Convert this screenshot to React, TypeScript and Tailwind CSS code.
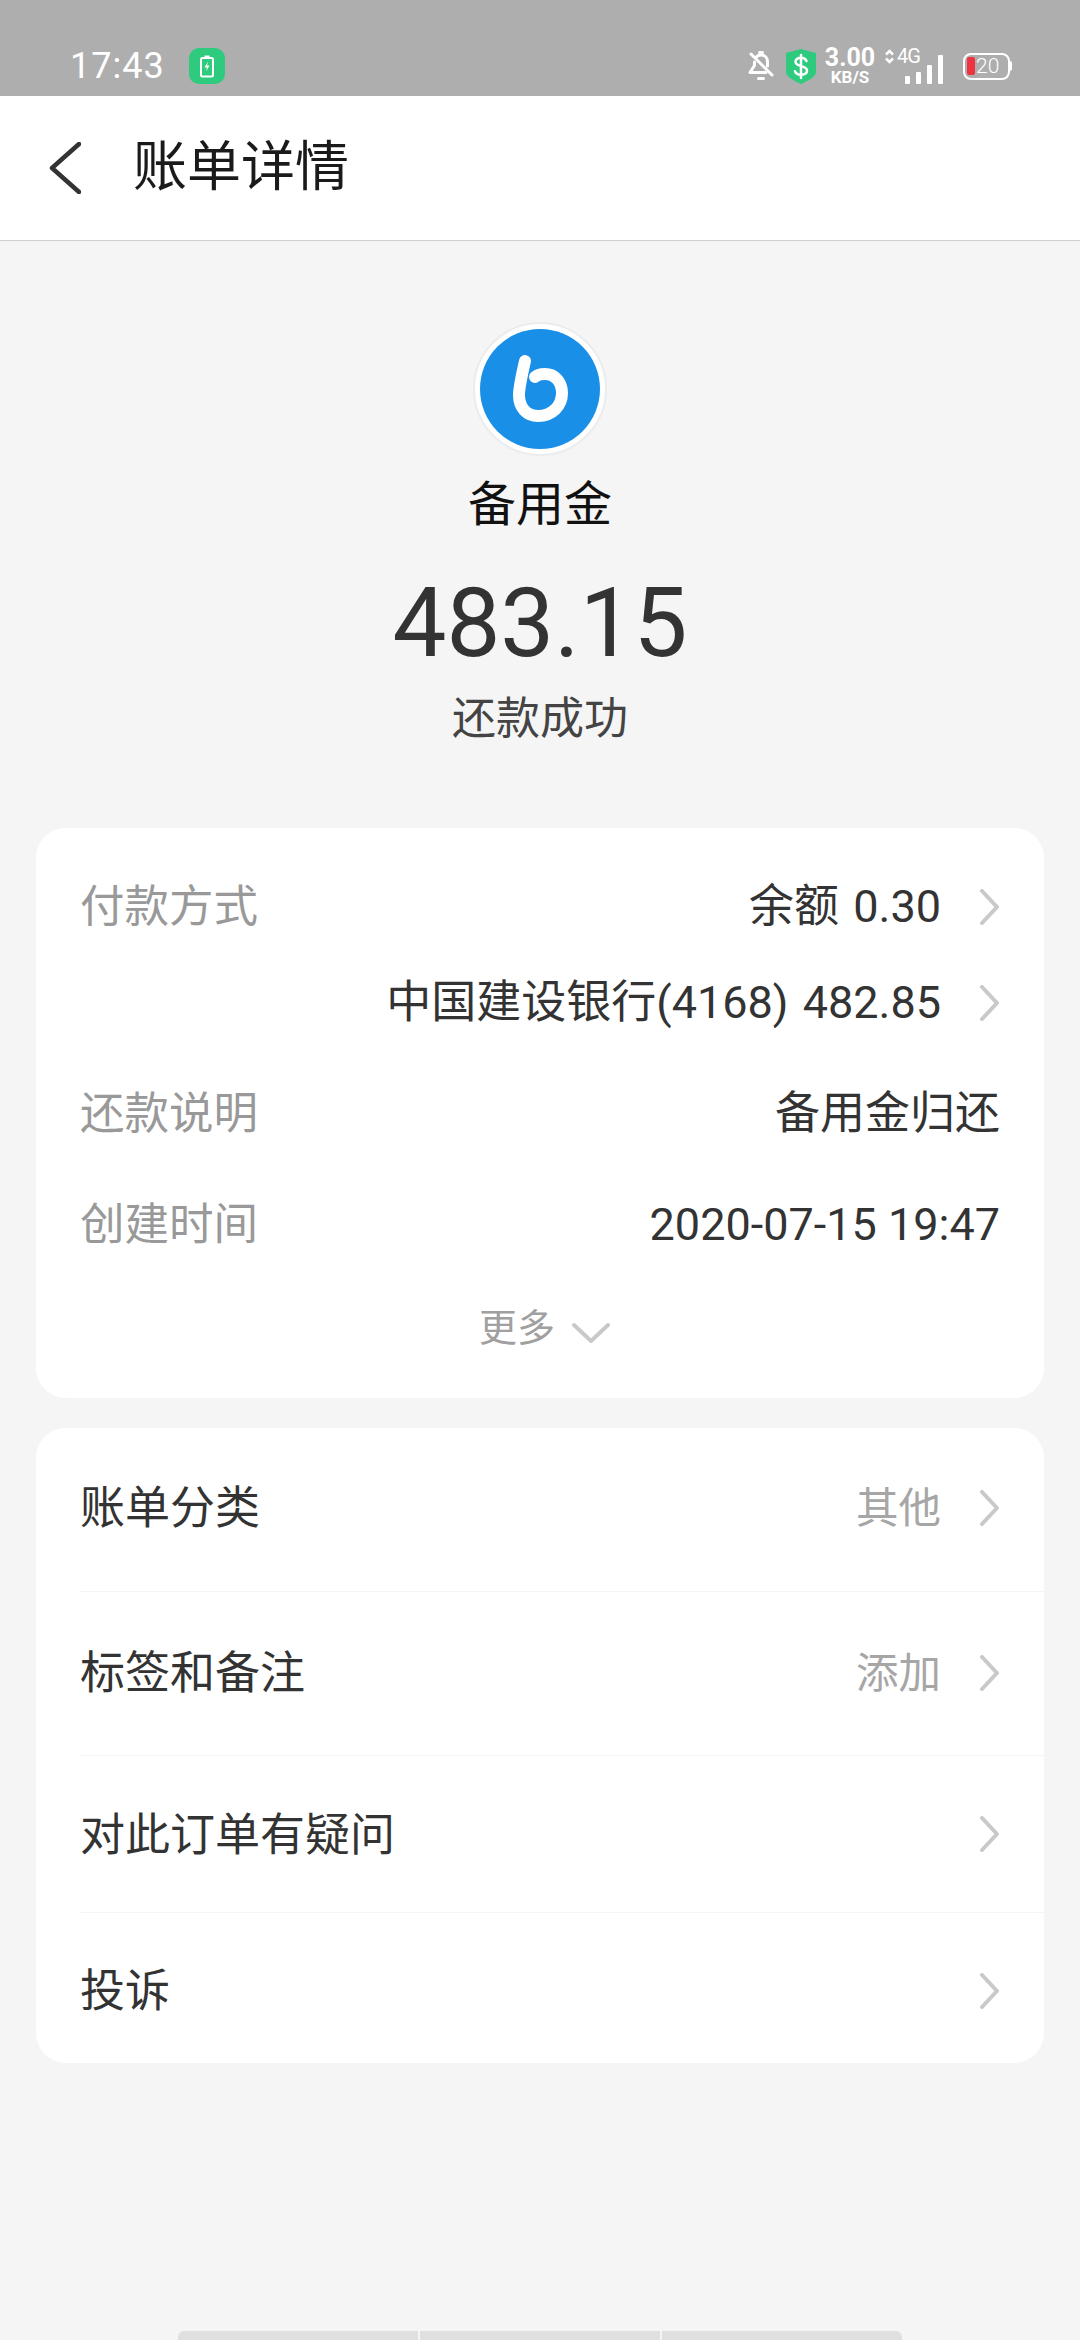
const font = { fontFamily: 'Roboto, "Noto Sans CJK SC", sans-serif' }

function ChevronRight() {
    return (
        <svg width="20" height="36" viewBox="0 0 20 36" fill="none" stroke="#c9c9c9" strokeWidth="4" strokeLinecap="round" strokeLinejoin="round" className="shrink-0">
            <path d="M2 2l15 16L2 34" />
        </svg>
    )
}

function StatusBar() {
    return (
        <div className="flex h-24 items-center justify-between bg-[#aeaeae] pl-[70px] pr-[68px] pt-9 text-white">
            <div className="flex items-center gap-6">
                <span className="text-[36px] leading-none tracking-[1px]">17:43</span>
                <div className="flex h-9 w-9 items-center justify-center rounded-[10px] bg-[#2ecb7e]">
                    <svg width="16" height="24" viewBox="0 0 16 24" fill="none">
                        <path d="M5.500 1.500h5v2.500h-5z" fill="#fff" />
                        <rect x="2" y="4" width="12" height="18.500" rx="1.500" stroke="#fff" strokeWidth="2" />
                        <path d="M9 7.500l-3.500 6H8l-1 4 3.500-6H8z" fill="#fff" />
                    </svg>
                </div>
            </div>
            <div className="flex items-center">
                <svg width="26" height="30" viewBox="0 0 26 30" fill="none" stroke="#fff" strokeWidth="3" strokeLinecap="round" strokeLinejoin="round">
                    <path d="M8 6.500c1.200-1.600 3-2.500 5-2.500 4 0 6.500 3 6.500 7v4" />
                    <path d="M6.500 11v3.500L2 21.500h16" />
                    <path d="M3 3l21 21" />
                    <path d="M11.500 1.500h3M10.500 27.500h5" />
                </svg>
                <svg width="30" height="35" viewBox="0 0 30 35" className="ml-3">
                    <path d="M15 0l15 4v19c0 4-6 8-15 12C6 31 0 27 0 23V4z" fill="#2ecb7e" />
                    <path d="M20.500 12c-1-2.300-3-3.200-5.500-3.200-3.200 0-5.500 1.500-5.500 4 0 5.800 11.500 2.800 11.500 8.800 0 2.800-2.600 4.200-6 4.200-2.800 0-5-1.100-6-3.600M15 6v23" fill="none" stroke="#fff" strokeWidth="2.500" strokeLinecap="round" />
                </svg>
                <div className="ml-[10px] flex w-[48px] flex-col items-center font-bold">
                    <span className="text-[25px] leading-[20px]">3.00</span>
                    <span className="mt-[2px] text-[17px] leading-[14px]">KB/S</span>
                </div>
                <div className="ml-[11px] flex h-[35px] w-[58px] items-end justify-between">
                    <div className="flex h-[35px] w-[36px] flex-col justify-between">
                        <div className="flex items-center gap-[3px]">
                            <svg width="9" height="15" viewBox="0 0 9 15" fill="none" stroke="#fff" strokeWidth="2.500" className="shrink-0">
                                <path d="M1 5.500l3.500-3.500L8 5.500M1 9.500L4.500 13 8 9.500" />
                            </svg>
                            <span className="text-[20px] leading-[15px] tracking-[-1px]">4G</span>
                        </div>
                        <div className="flex items-end justify-end gap-[6px]">
                            <div className="h-2 w-[5px] rounded-[1px] bg-white" />
                            <div className="h-3 w-[5px] rounded-[1px] bg-white" />
                        </div>
                    </div>
                    <div className="h-[19px] w-[5px] rounded-[1px] bg-white" />
                    <div className="h-[29px] w-[5px] rounded-[1px] bg-white" />
                </div>
                <div className="ml-5 flex items-center">
                    <div className="flex h-[27px] w-[47px] items-center gap-px rounded-[8px] border-[2.5px] border-white pl-[2px]">
                        <div className="h-[18px] w-2 rounded-[2px] bg-[#ef3340]" />
                        <span className="text-[21px] font-light leading-none">20</span>
                    </div>
                    <div className="h-[10px] w-[2px] rounded-r-sm bg-white" />
                </div>
            </div>
        </div>
    )
}

function Logo() {
    return (
        <div className="flex h-[134px] w-[134px] items-center justify-center rounded-full border-2 border-[#ececec] bg-white">
            <svg width="120" height="120" viewBox="0 0 120 120" className="shrink-0">
                <circle cx="60" cy="60" r="60" fill="#1a8fe8" />
                <path d="M45 32C42 45 39 58 39 66c0 13 8 21 19 21 14 0 24-10 24-23 0-11-7-19-17-19-4 0-8 1-10 3" fill="none" stroke="#fff" strokeWidth="12" strokeLinecap="round" />
            </svg>
        </div>
    )
}

function DetailRow({ label, value, chevron, className }: { label?: string; value: string; chevron?: boolean; className: string }) {
    return (
        <div className={`flex items-center justify-between px-11 text-[45px] ${className}`}>
            <span className="text-[44.500px] text-[#999999]">{label}</span>
            <div className="flex items-center gap-[39px] text-[#333333]">
                <span>{value}</span>
                {chevron && <ChevronRight />}
            </div>
        </div>
    )
}

function ActionRow({ label, value, className }: { label: string; value?: string; className: string }) {
    return (
        <div className={`ml-11 flex items-center justify-between pr-11 ${className}`}>
            <span className="pt-[3px] text-[45px] text-[#333333]">{label}</span>
            <div className="flex items-center gap-[39px] text-[#a6a6a6]">
                {value && <span className="pt-[3px] text-[42.500px]">{value}</span>}
                <ChevronRight />
            </div>
        </div>
    )
}

export default function App() {
    return (
        <div className="flex h-[2340px] w-[1080px] flex-col overflow-hidden bg-[#f5f5f5]" style={font}>
            <StatusBar />
            <header className="flex h-[145px] items-center border-b border-[#cfcfcf] bg-white pl-[49px]">
                <svg width="32" height="52" viewBox="0 0 32 52" fill="none" stroke="#333333" strokeWidth="4.500" strokeLinecap="round" strokeLinejoin="round">
                    <path d="M30 2L3 26l27 24" />
                </svg>
                <h1 className="ml-[52px] text-[54px] font-normal leading-none text-[#1a1a1a]">账单详情</h1>
            </header>

            <div className="flex flex-col items-center pt-[81px]">
                <Logo />
                <div className="mt-[19px] text-[48px] leading-[60px] text-[#111111]">备用金</div>
                <div className="mt-[29px] text-[96px] leading-[118px] text-[#333333]">483.15</div>
                <div className="mt-[9px] text-[44px] leading-[56px] text-[#444444]">还款成功</div>
            </div>

            <section className="mx-9 mt-[81px] rounded-[30px] bg-white pb-[21px] pt-[31px]">
                <DetailRow label="付款方式" value="余额 0.30" chevron className="h-24 [word-spacing:3px]" />
                <DetailRow value="中国建设银行(4168) 482.85" chevron className="h-24 [word-spacing:3px]" />
                <DetailRow label="还款说明" value="备用金归还" className="mt-[7px] h-28" />
                <DetailRow label="创建时间" value="2020-07-15 19:47" className="h-[110px]" />
                <div className="ml-[9px] flex h-[97px] items-center justify-center gap-[17px]">
                    <span className="text-[38px] text-[#a0a0a0]">更多</span>
                    <svg width="38" height="22" viewBox="0 0 38 22" fill="none" stroke="#c9c9c9" strokeWidth="4" strokeLinecap="round" strokeLinejoin="round" className="mt-2">
                        <path d="M2 3l17 16L36 3" />
                    </svg>
                </div>
            </section>

            <section className="mx-9 mt-[30px] rounded-[30px] bg-white">
                <ActionRow label="账单分类" value="其他" className="h-[164px] border-b border-[#f5f5f5] pb-[4px]" />
                <ActionRow label="标签和备注" value="添加" className="h-[164px] border-b border-[#f5f5f5] pb-[2px]" />
                <ActionRow label="对此订单有疑问" className="h-[157px] border-b border-[#f5f5f5]" />
                <ActionRow label="投诉" className="h-[150px] pt-[5px]" />
            </section>

            <div className="mx-auto mt-auto flex h-[9px] w-[724px] gap-[2px]">
                <div className="flex-1 rounded-tl-[6px] bg-[#e0e0e0]" />
                <div className="flex-1 bg-[#e0e0e0]" />
                <div className="flex-1 rounded-tr-[6px] bg-[#e0e0e0]" />
            </div>
        </div>
    )
}
